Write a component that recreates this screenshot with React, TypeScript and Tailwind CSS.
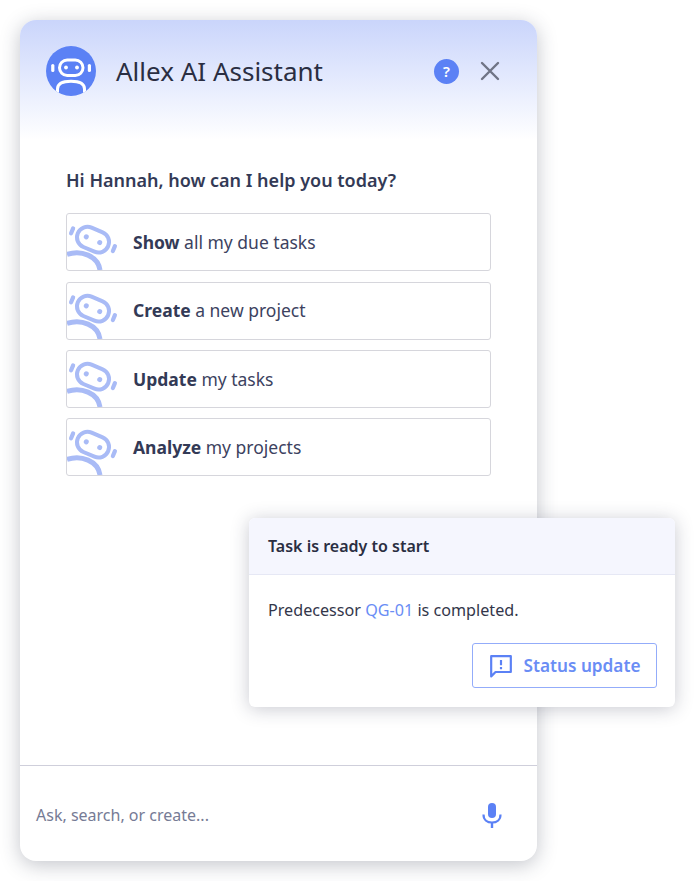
const font = { fontFamily: '"Noto Sans", sans-serif' };

function RobotLogo() {
  return (
    <svg width="50" height="50" viewBox="0 0 50 50">
      <defs>
        <clipPath id="logo-clip">
          <circle cx="25" cy="25" r="25" />
        </clipPath>
      </defs>
      <circle cx="25" cy="25" r="25" fill="#5b81f5" />
      <g clipPath="url(#logo-clip)">
        <rect x="13.5" y="14" width="23.5" height="15.5" rx="7.7" fill="none" stroke="#fff" strokeWidth="3" />
        <circle cx="20" cy="21.5" r="1.9" fill="#fff" />
        <circle cx="31" cy="21.5" r="1.9" fill="#fff" />
        <rect x="5.2" y="18" width="3.2" height="8" rx="1.6" fill="#fff" />
        <rect x="41.8" y="18" width="3.2" height="8" rx="1.6" fill="#fff" />
        <path d="M11.5 52 V43 C11.5 37.5 17 35.2 25 35.2 C33 35.2 38.5 37.5 38.5 43 V52" fill="none" stroke="#fff" strokeWidth="3" />
      </g>
    </svg>
  );
}

function RowRobot() {
  return (
    <svg width="52" height="56" viewBox="0 0 52 56" className="shrink-0">
      <g transform="rotate(23 26 25.7)" fill="#a9bbf6">
        <rect x="9.5" y="15.2" width="33" height="21" rx="10.5" fill="none" stroke="#a9bbf6" strokeWidth="4" />
        <circle cx="18.7" cy="25.7" r="2.5" />
        <circle cx="33.3" cy="25.7" r="2.5" />
        <rect x="1.2" y="21" width="4.2" height="9.4" rx="2.1" />
        <rect x="46.6" y="21" width="4.2" height="9.4" rx="2.1" />
      </g>
      <path d="M0 40.5 C14 35.5 31 42 33 56" fill="none" stroke="#a9bbf6" strokeWidth="5" />
    </svg>
  );
}

const prompts = [
  { verb: "Show", rest: "all my due tasks" },
  { verb: "Create", rest: "a new project" },
  { verb: "Update", rest: "my tasks" },
  { verb: "Analyze", rest: "my projects" },
];

export default function App() {
  return (
    <div className="relative w-[695px] h-[881px] bg-white overflow-hidden" style={font}>
      <div className="absolute left-5 top-5 w-[517px] h-[841px] flex flex-col bg-white rounded-2xl overflow-hidden shadow-[0_4px_20px_rgba(40,45,70,0.28)]">
        {/* header */}
        <div className="h-[120px] shrink-0 flex items-center pl-[26px] pr-[37px] pb-[18px] bg-gradient-to-b from-[#cad5fb] to-white">
          <RobotLogo />
          <h1 className="ml-5 text-[26px] leading-none text-[#2a2e42] flex-1">Allex AI Assistant</h1>
          <div className="w-[25px] h-[25px] rounded-full bg-[#5b81f5] text-white text-[15px] font-semibold flex items-center justify-center">
            ?
          </div>
          <svg width="20" height="20" viewBox="0 0 20 20" className="ml-[21px]">
            <path d="M2 2 L18 18 M18 2 L2 18" stroke="#6f7485" strokeWidth="2.4" strokeLinecap="round" />
          </svg>
        </div>

        {/* prompts */}
        <div className="flex-1 px-[46px] pt-[28px]">
          <p className="text-[18px] leading-6 font-semibold text-[#333a56]">Hi Hannah, how can I help you today?</p>
          <div className="mt-[21.2px] w-[425px] flex flex-col gap-[10.33px]">
            {prompts.map((p) => (
              <div key={p.verb} className="h-[58px] flex items-end border border-[#d6d6dc] rounded-[3px] overflow-hidden">
                <RowRobot />
                <div className="h-full flex items-center ml-[14px] text-[17.5px] text-[#3c4260]">
                  <span className="font-bold text-[#333a56]">{p.verb}</span>
                  <span className="ml-[4.5px]">{p.rest}</span>
                </div>
              </div>
            ))}
          </div>
        </div>

        {/* input */}
        <div className="h-[96px] shrink-0 flex items-center justify-between border-t border-[#cfcfdb] pl-4 pr-[35px] pt-[2px]">
          <span className="text-[16px] text-[#767b95]">Ask, search, or create...</span>
          <svg width="20" height="26" viewBox="0 0 20 26">
            <rect x="6" y="1" width="8" height="15" rx="4" fill="#5b81f5" />
            <path d="M1.5 12.5 C1.5 18 5.5 20.5 10 20.5 C14.5 20.5 18.5 18 18.5 12.5" fill="none" stroke="#5b81f5" strokeWidth="2.2" />
            <path d="M10 20 V26" stroke="#5b81f5" strokeWidth="2.4" />
          </svg>
        </div>
      </div>

      {/* notification popover */}
      <div className="absolute left-[249px] top-[518px] w-[426px] h-[189px] bg-white rounded-md overflow-hidden shadow-[0_2px_18px_rgba(40,45,70,0.25)]">
        <div className="h-[57px] flex items-center px-[19px] bg-[#f5f6fe] border-b border-[#e6e8f5]">
          <span className="text-[16px] font-semibold text-[#2a2e42]">Task is ready to start</span>
        </div>
        <div className="pl-[19px] pr-[18px] pt-[25px]">
          <p className="text-[16.15px] leading-5 text-[#33364a]">
            Predecessor <span className="text-[#6a8df5]">QG-01</span> is completed.
          </p>
          <div className="flex justify-end mt-[23px]">
            <button className="w-[185px] h-[45px] flex items-center justify-center gap-[11px] border border-[#93acfa] rounded-[3px] text-[17.2px] font-semibold text-[#6a8df5]">
              <svg width="24" height="24" viewBox="0 0 22 22">
                <path d="M2 2 H20 V16.5 H6 L2 20.5 Z" fill="none" stroke="#5b81f5" strokeWidth="2" strokeLinejoin="round" />
                <path d="M11 5.5 V10.2 M11 12 V14" stroke="#5b81f5" strokeWidth="2" />
              </svg>
              Status update
            </button>
          </div>
        </div>
      </div>
    </div>
  );
}
